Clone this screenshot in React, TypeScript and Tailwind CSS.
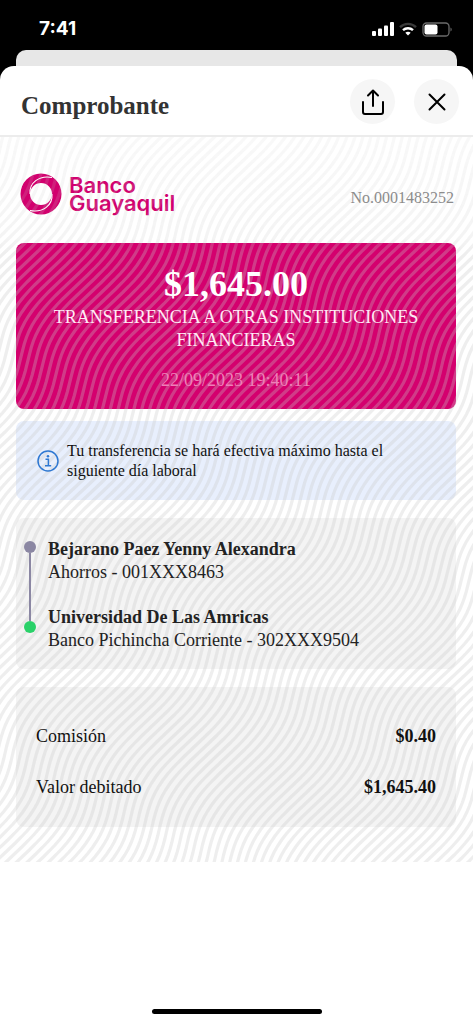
import React from 'react'

const WAVE_COUNT = 120

// One wave, drawn once and repeated along a diagonal
function wavePath() {
  const points: string[] = []
  for (let y = -460; y <= 760; y += 6) {
    const t = y + 92
    const x = -0.65 * t - 10 * Math.sin((2 * Math.PI * t) / 152)
    points.push(`${x.toFixed(1)} ${y}`)
  }
  return `M${points.join('L')}`
}

function Waves() {
  return (
    <svg
      className="pointer-events-none absolute inset-0 h-full w-full"
      viewBox="0 0 473 725"
      preserveAspectRatio="xMidYMid slice"
      aria-hidden="true"
    >
      <defs>
        <path id="wave" d={wavePath()} fill="none" stroke="#c8c8c8" strokeOpacity="0.3" strokeWidth="3.2" />
        <linearGradient id="fade" x1="0" y1="0" x2="0" y2="1">
          <stop offset="0" stopColor="#fff" stopOpacity="0.4" />
          <stop offset="0.14" stopColor="#fff" stopOpacity="0.65" />
          <stop offset="0.16" stopColor="#fff" />
        </linearGradient>
        <mask id="fade-mask" maskUnits="userSpaceOnUse" x="0" y="0" width="473" height="725">
          <rect width="473" height="725" fill="url(#fade)" />
        </mask>
      </defs>
      <g mask="url(#fade-mask)">
        {Array.from({ length: WAVE_COUNT }, (_, i) => (
          <use key={i} href="#wave" transform={`translate(${i * 7 - 20} ${i * 3.5 - 10})`} />
        ))}
      </g>
    </svg>
  )
}

function StatusBar() {
  return (
    <div className="flex h-[50px] items-center justify-between pt-2 pr-5 pl-[39px] text-white">
      <span className="font-['Inter',sans-serif] text-[19px] font-bold">7:41</span>
      <div className="flex items-center gap-[5px]">
        <svg width="22" height="14" viewBox="0 0 22 14" fill="currentColor" aria-hidden="true">
          <rect x="0" y="9" width="4" height="5" rx="1" />
          <rect x="6" y="6.5" width="4" height="7.5" rx="1" />
          <rect x="12" y="3.5" width="4" height="10.5" rx="1" />
          <rect x="18" y="0" width="4" height="14" rx="1" />
        </svg>
        <svg width="18" height="14" viewBox="0 0 18 14" fill="none" strokeWidth="2.4" aria-hidden="true">
          <path d="M1 5.2C5.6.7 12.4.7 17 5.2" stroke="#3a3a3a" />
          <path d="M4 8.2C6.8 5.6 11.2 5.6 14 8.2" stroke="#fff" />
          <path d="M6.3 10.8C7.8 9.5 10.2 9.5 11.7 10.8L9 13.6Z" fill="#fff" />
        </svg>
        <svg width="31" height="15" viewBox="0 0 31 15" fill="none" aria-hidden="true">
          <rect x="1" y="1" width="26" height="13" rx="3.5" stroke="#6b6b6b" strokeWidth="1.3" />
          <rect x="2.5" y="2.5" width="13" height="10" rx="2" fill="#fff" />
          <path d="M28.5 5.5v4c1.6-.6 1.6-3.4 0-4Z" fill="#6b6b6b" />
        </svg>
      </div>
    </div>
  )
}

function SheetHeader() {
  return (
    <header className="flex h-[71px] items-center justify-between border-b-2 border-[#ececec] pt-[2px] pr-[14px] pl-[21px]">
      <h1 className="pt-2 text-[25px] leading-8 font-bold text-[#333]">Comprobante</h1>
      <div className="flex gap-[19px]">
        <button type="button" aria-label="Compartir" className="flex size-[45px] items-center justify-center rounded-full bg-[#f6f6f6]">
          <svg width="24" height="28" viewBox="0 0 24 28" fill="none" stroke="#000" strokeWidth="2" strokeLinecap="round" strokeLinejoin="round">
            <path d="M2 14v10a2 2 0 0 0 2 2h16a2 2 0 0 0 2-2V14M12 18V2.5M7 7.5l5-5 5 5" />
          </svg>
        </button>
        <button type="button" aria-label="Cerrar" className="flex size-[45px] items-center justify-center rounded-full bg-[#f6f6f6]">
          <svg width="18" height="18" viewBox="0 0 18 18" fill="none" stroke="#000" strokeWidth="2" strokeLinecap="round">
            <path d="M1.5 1.5l15 15M16.5 1.5l-15 15" />
          </svg>
        </button>
      </div>
    </header>
  )
}

function Logo() {
  return (
    <div className="flex items-center gap-[7px] text-[#d2006e]">
      <svg width="42" height="42" viewBox="0 0 42 42" aria-hidden="true">
        <path
          fill="currentColor"
          fillRule="evenodd"
          d="M21 .5a20.5 20.5 0 1 0 0 41a20.5 20.5 0 1 0 0-41ZM21 10a11 11 0 1 1 0 22a11 11 0 1 1 0-22Z"
        />
        <g fill="none" stroke="#fff" strokeWidth="1.1">
          <path d="M10 21C9 10 19 2 32 4.5" />
          <path d="M32 21C33 32 23 40 10 37.5" />
        </g>
      </svg>
      <p className="font-['Inter',sans-serif] text-[22px] leading-[18px] font-semibold">
        Banco
        <br />
        Guayaquil
      </p>
    </div>
  )
}

const accounts = [
  { name: 'Bejarano Paez Yenny Alexandra', detail: 'Ahorros - 001XXX8463' },
  { name: 'Universidad De Las Amricas', detail: 'Banco Pichincha Corriente - 302XXX9504' },
]

const totals = [
  { label: 'Comisión', value: '$0.40' },
  { label: 'Valor debitado', value: '$1,645.40' },
]

export default function App() {
  return (
    <div className="flex min-h-screen flex-col bg-black font-['Liberation_Serif',serif]">
      <StatusBar />
      <div className="mx-4 h-4 rounded-t-[10px] bg-[#e7e7e7]" />
      <div className="flex flex-1 flex-col rounded-t-[14px] bg-white">
        <SheetHeader />

        <main className="relative overflow-hidden pt-9 pr-[17px] pb-[35px] pl-4">
          <div className="flex items-center justify-between pr-[2px] pl-1">
            <Logo />
            <span className="relative z-10 pt-2 text-[16px] leading-5 text-[#8c8c8c]">No.0001483252</span>
          </div>

          <section className="mt-7 rounded-lg bg-[#d4006e] px-6 pt-[21px] pb-[17px] text-center text-[18px] leading-[23px]">
            <div className="relative z-10">
              <p className="mb-[2px] text-[36px] leading-10 font-bold text-white">$1,645.00</p>
              <p className="text-[#ffe9f5]">TRANSFERENCIA A OTRAS INSTITUCIONES FINANCIERAS</p>
              <p className="mt-[17px] text-[#ee80b8]">22/09/2023 19:40:11</p>
            </div>
          </section>

          <section className="mt-3 flex h-[79px] items-center gap-2 rounded-lg bg-[#e8effd] pr-12 pl-[21px]">
            <svg className="relative z-10 shrink-0" width="22" height="22" viewBox="0 0 22 22" fill="none" stroke="#2f78d2" strokeWidth="1.5" aria-hidden="true">
              <circle cx="11" cy="11" r="10" />
              <path d="M8.5 9.3h2.9v6.2M8 15.7h6.2" />
              <circle cx="11" cy="6.2" r="1.3" fill="#2f78d2" stroke="none" />
            </svg>
            <p className="relative z-10 text-[16px] leading-5 text-[#111]">
              Tu transferencia se hará efectiva máximo hasta el siguiente día laboral
            </p>
          </section>

          <section className="mt-[18px] flex gap-3 rounded-lg bg-[#f4f4f4] pt-5 pr-4 pb-[17px] pl-2 text-[18px] leading-[23px]">
            <div className="relative z-10 mt-[3px] mb-[19px] flex flex-col items-center">
              <span className="size-3 rounded-full bg-[#8b87a3]" />
              <span className="w-[2px] flex-1 bg-[#8b87a3]" />
              <span className="size-3 rounded-full bg-[#2ad169]" />
            </div>
            <div className="relative z-10 flex flex-col gap-[22px] text-[#222]">
              {accounts.map((account) => (
                <div key={account.name}>
                  <p className="font-bold">{account.name}</p>
                  <p>{account.detail}</p>
                </div>
              ))}
            </div>
          </section>

          <dl className="mt-[18px] flex flex-col gap-7 rounded-lg bg-[#f4f4f4] px-5 pt-[38px] pb-7 text-[18px] leading-[23px] text-[#111]">
            {totals.map((row) => (
              <div key={row.label} className="relative z-10 flex justify-between">
                <dt>{row.label}</dt>
                <dd className="font-bold">{row.value}</dd>
              </div>
            ))}
          </dl>

          <Waves />
        </main>

        <div className="mt-auto flex justify-center pb-[10px]">
          <div className="h-[5px] w-[170px] rounded-full bg-black" />
        </div>
      </div>
    </div>
  )
}
